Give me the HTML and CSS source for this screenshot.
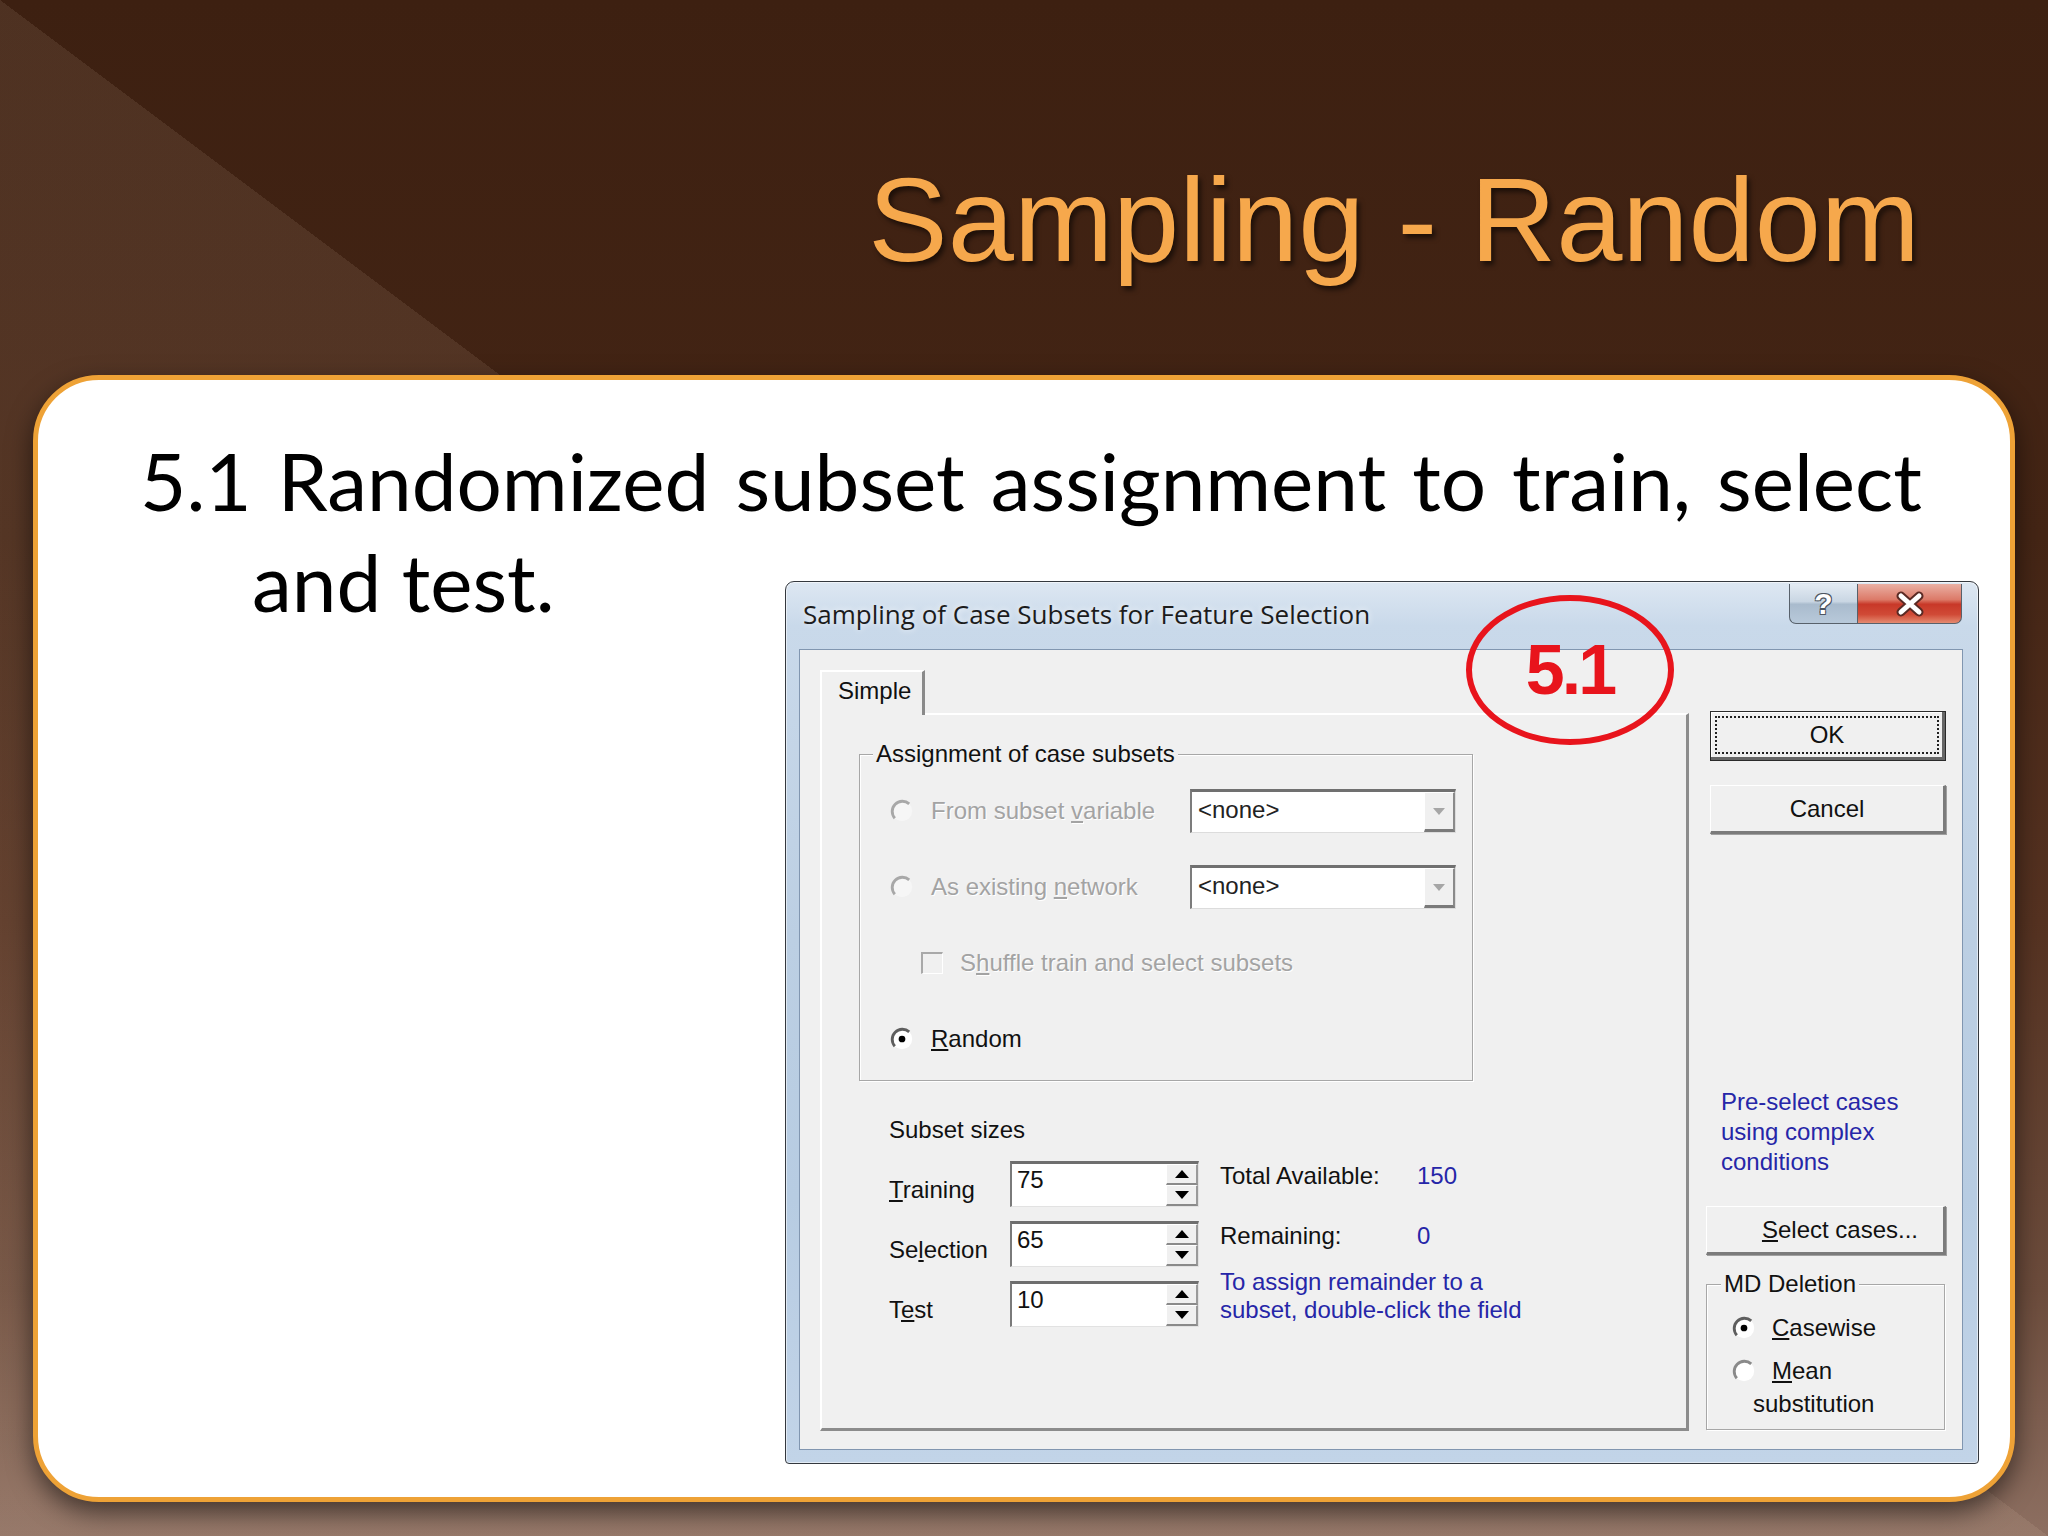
FILE: index.html
```html
<!DOCTYPE html>
<html>
<head>
<meta charset="utf-8">
<title>Sampling - Random</title>
<link rel="stylesheet" href="styles.css">
</head>
<body>
<div class="slide">
  <h1 class="title">Sampling - Random</h1>
  <div class="card">
    <div class="line1">5.1 Randomized subset assignment to train, select</div>
    <div class="row">
      <div class="line2">and test.</div>
      <div class="dialog">
        <div class="titlebar">
          <span class="wtitle">Sampling of Case Subsets for Feature Selection</span>
          <div class="wbtns">
            <span class="wb help">?</span>
            <span class="wb close"><svg class="xicon" viewBox="0 0 40 28" width="40" height="28"><path d="M11 6 L29 22 M29 6 L11 22" stroke="#5a2a24" stroke-width="9" stroke-linecap="round"/><path d="M11 6 L29 22 M29 6 L11 22" stroke="#fff" stroke-width="5" stroke-linecap="round"/></svg></span>
          </div>
        </div>
        <div class="client">
          <div class="leftcol">
            <div class="tabs"><div class="tab">Simple</div></div>
            <div class="panel">
              <div class="group assign">
                <div class="glabel">Assignment of case subsets</div>
                <div class="opt first">
                  <div class="optlabel">
                    <svg class="rb" viewBox="0 0 20 20"><circle cx="10" cy="10" r="8.5" fill="#f6f6f6"/><path d="M4 16A8.5 8.5 0 0 1 16 4" fill="none" stroke="#a8a8a8" stroke-width="2.4"/></svg>
                    <span class="dis">From subset <u>v</u>ariable</span>
                  </div>
                  <div class="combo"><span class="cval">&lt;none&gt;</span><span class="ddbtn"><svg viewBox="0 0 12 7" width="12" height="7"><path d="M0 0H12L6 7Z" fill="#a6a6a6"/></svg></span></div>
                </div>
                <div class="opt">
                  <div class="optlabel">
                    <svg class="rb" viewBox="0 0 20 20"><circle cx="10" cy="10" r="8.5" fill="#f6f6f6"/><path d="M4 16A8.5 8.5 0 0 1 16 4" fill="none" stroke="#a8a8a8" stroke-width="2.4"/></svg>
                    <span class="dis">As existing <u>n</u>etwork</span>
                  </div>
                  <div class="combo"><span class="cval">&lt;none&gt;</span><span class="ddbtn"><svg viewBox="0 0 12 7" width="12" height="7"><path d="M0 0H12L6 7Z" fill="#a6a6a6"/></svg></span></div>
                </div>
                <div class="opt chkrow">
                  <span class="cb"></span>
                  <span class="dis">S<u>h</u>uffle train and select subsets</span>
                </div>
                <div class="opt">
                  <div class="optlabel">
                    <svg class="rb" viewBox="0 0 20 20"><circle cx="10" cy="10" r="8.5" fill="#fff"/><path d="M4 16A8.5 8.5 0 0 1 16 4" fill="none" stroke="#5e5e5e" stroke-width="2.4"/><circle cx="10" cy="10" r="2.8" fill="#000"/></svg>
                    <span><u>R</u>andom</span>
                  </div>
                </div>
              </div>
              <div class="subset">
                <div class="ss-title">Subset sizes</div>
                <div class="ss-body">
                  <div class="ss-grid">
                    <div class="ss-lbl"><u>T</u>raining</div>
                    <div class="spin"><span class="sval">75</span><span class="sbtns"><span class="sb"><svg viewBox="0 0 14 8" width="14" height="8"><path d="M0 8H14L7 0Z" fill="#000"/></svg></span><span class="sb"><svg viewBox="0 0 14 8" width="14" height="8"><path d="M0 0H14L7 8Z" fill="#000"/></svg></span></span></div>
                    <div class="ss-lbl">Se<u>l</u>ection</div>
                    <div class="spin"><span class="sval">65</span><span class="sbtns"><span class="sb"><svg viewBox="0 0 14 8" width="14" height="8"><path d="M0 8H14L7 0Z" fill="#000"/></svg></span><span class="sb"><svg viewBox="0 0 14 8" width="14" height="8"><path d="M0 0H14L7 8Z" fill="#000"/></svg></span></span></div>
                    <div class="ss-lbl">T<u>e</u>st</div>
                    <div class="spin"><span class="sval">10</span><span class="sbtns"><span class="sb"><svg viewBox="0 0 14 8" width="14" height="8"><path d="M0 8H14L7 0Z" fill="#000"/></svg></span><span class="sb"><svg viewBox="0 0 14 8" width="14" height="8"><path d="M0 0H14L7 8Z" fill="#000"/></svg></span></span></div>
                  </div>
                  <div class="ss-info">
                    <div class="kv"><span>Total Available:</span><span class="blue">150</span></div>
                    <div class="kv r2"><span>Remaining:</span><span class="blue">0</span></div>
                    <div class="note blue">To assign remainder to a<br>subset, double-click the field</div>
                  </div>
                </div>
              </div>
            </div>
          </div>
          <div class="rightcol">
            <div class="btn ok"><span class="focus">OK</span></div>
            <div class="btn cancel">Cancel</div>
            <div class="presel blue">Pre-select cases<br>using complex<br>conditions</div>
            <div class="btn selc"><span><u>S</u>elect cases...</span></div>
            <div class="group md">
              <div class="glabel">MD Deletion</div>
              <div class="mdrow first">
                <svg class="rb" viewBox="0 0 20 20"><circle cx="10" cy="10" r="8.5" fill="#fff"/><path d="M4 16A8.5 8.5 0 0 1 16 4" fill="none" stroke="#5e5e5e" stroke-width="2.4"/><circle cx="10" cy="10" r="2.8" fill="#000"/></svg>
                <span><u>C</u>asewise</span>
              </div>
              <div class="mdrow">
                <svg class="rb" viewBox="0 0 20 20"><circle cx="10" cy="10" r="8.5" fill="#fff"/><path d="M4 16A8.5 8.5 0 0 1 16 4" fill="none" stroke="#8a8a8a" stroke-width="2.4"/></svg>
                <span><u>M</u>ean</span>
              </div>
              <div class="mdsub">substitution</div>
            </div>
          </div>
        </div>
        <div class="mark">5.1</div>
      </div>
    </div>
  </div>
</div>
</body>
</html>
```

FILE: styles.css
```css
* { box-sizing: border-box; }
html, body { margin: 0; padding: 0; }
body {
  width: 2048px;
  height: 1536px;
  overflow: hidden;
  font-family: "Liberation Sans", Arial, sans-serif;
}
.slide {
  width: 2048px;
  height: 1536px;
  display: flex;
  flex-direction: column;
  background:
    linear-gradient(to top right, rgba(255, 225, 200, 0.09) 50%, rgba(0, 0, 0, 0) 50%),
    linear-gradient(to bottom, #3d2011 0%, #442515 35%, #553221 60%, #6c4c3c 84%, #8d6f61 100%);
}
.title {
  margin: 160px 128px 0 0;
  align-self: flex-end;
  font: 400 119px/119px "Liberation Sans", Arial, sans-serif;
  color: #f6a84c;
  text-shadow: 3px 4px 5px rgba(0, 0, 0, 0.55);
}
.card {
  margin: 96px 0 0 33px;
  width: 1982px;
  height: 1127px;
  background: #fff;
  border: 5px solid #eea236;
  border-radius: 66px;
  box-shadow: 0 10px 26px rgba(0, 0, 0, 0.55);
  padding-top: 50px;
  display: flex;
  flex-direction: column;
}
.line1 {
  margin-left: 102px;
  width: 1782px;
  font: 400 80px/101px Lato, sans-serif;
  color: #000;
  text-align: justify;
  text-align-last: justify;
}
.row { display: flex; }
.line2 {
  flex: none;
  width: 747px;
  padding-left: 214px;
  font: 400 80px/101px Lato, sans-serif;
  color: #000;
}

/* Dialog window */
.dialog {
  position: relative;
  flex: none;
  margin-top: 50px;
  width: 1194px;
  height: 883px;
  border: 1px solid #34383e;
  border-radius: 9px 9px 4px 4px;
  background: linear-gradient(to bottom, #dde7f2 0%, #c9d9ea 5%, #bccfe3 40%, #b7cce2 70%, #c2d4e8 100%);
  box-shadow: inset 0 0 0 1px rgba(255, 255, 255, 0.55);
  display: flex;
  flex-direction: column;
  font: 400 24px/30px "Liberation Sans", Arial, sans-serif;
  color: #111;
}
.titlebar {
  height: 67px;
  flex: none;
  display: flex;
  align-items: flex-start;
  padding-left: 17px;
}
.wtitle {
  margin-top: 16px;
  font: 400 26px/32px "Open Sans", "Liberation Sans", sans-serif;
  color: #1c1c1c;
  text-shadow: 0 0 6px rgba(255, 255, 255, 0.9);
}
.wbtns {
  margin: 2px 16px 0 auto;
  display: flex;
  height: 40px;
}
.wb {
  height: 40px;
  display: flex;
  align-items: center;
  justify-content: center;
  border: 1px solid #58616b;
  border-top: none;
}
.help {
  width: 68px;
  border-right: none;
  border-radius: 0 0 0 7px;
  background: linear-gradient(to bottom, #e3ebf3 0%, #c9d6e3 45%, #a9bbcd 52%, #b8c9da 100%);
  font: 700 30px/1 "Liberation Sans", Arial, sans-serif;
  color: #fff;
  text-shadow: -1px -1px 0 #4d5560, 1px -1px 0 #4d5560, -1px 1px 0 #4d5560, 1px 1px 0 #4d5560;
}
.close {
  width: 105px;
  border-radius: 0 0 7px 0;
  background: linear-gradient(to bottom, #eab0a4 0%, #dc7a68 40%, #c83828 52%, #d04a36 78%, #e58a70 100%);
}
.xicon { display: block; }

.client {
  flex: 1;
  margin: 0 15px 13px 13px;
  background: #f0f0f0;
  border: 1px solid #8196b0;
  display: flex;
  gap: 17px;
  padding: 20px 16px 0 20px;
}
.leftcol {
  width: 869px;
  flex: none;
  display: flex;
  flex-direction: column;
}
.tabs { height: 43px; display: flex; position: relative; z-index: 1; }
.tab {
  width: 105px;
  height: 45px;
  background: #f0f0f0;
  border-style: solid;
  border-width: 2px 3px 0 2px;
  border-color: #fff #8a8a8a #f0f0f0 #fff;
  padding: 2px 0 0 16px;
  line-height: 34px;
}
.panel {
  height: 718px;
  border-style: solid;
  border-width: 2px 3px 3px 2px;
  border-color: #fff #8c8c8c #8c8c8c #fff;
  padding: 39px 0 0 37px;
}

.group {
  border: 1px solid #a7a7a7;
  box-shadow: 1px 1px 0 #fff, inset 1px 1px 0 #fff;
  display: flex;
  flex-direction: column;
}
.glabel {
  align-self: flex-start;
  margin-top: -15px;
  padding: 0 3px;
  background: #f0f0f0;
  line-height: 28px;
}
.assign {
  width: 614px;
  height: 327px;
  padding-left: 30px;
}
.assign .glabel { margin-left: -17px; }
.opt {
  height: 50px;
  display: flex;
  align-items: center;
  margin-top: 26px;
}
.opt.first { margin-top: 18px; }
.optlabel {
  width: 300px;
  flex: none;
  display: flex;
  align-items: center;
}
.rb { width: 24px; height: 24px; flex: none; margin-right: 17px; }
.dis { color: #a3a3a3; text-shadow: 1px 1px 0 #fff; }
.combo {
  width: 266px;
  height: 44px;
  background: #fff;
  border-style: solid;
  border-width: 3px 1px 1px 2px;
  border-color: #707070 #dcdcdc #dcdcdc #7c7c7c;
  display: flex;
  align-items: center;
}
.cval { padding-left: 6px; line-height: 30px; margin-top: -4px; color: #222; }
.ddbtn {
  margin-left: auto;
  width: 31px;
  height: 100%;
  background: #f0f0f0;
  border-style: solid;
  border-width: 1px 2px 3px 1px;
  border-color: #fff #8a8a8a #7a7a7a #fff;
  display: flex;
  align-items: center;
  justify-content: center;
}
.chkrow { padding-left: 31px; }
.cb {
  width: 22px;
  height: 22px;
  flex: none;
  margin-right: 17px;
  background: #f0f0f0;
  border-style: solid;
  border-width: 2px 1px 1px 2px;
  border-color: #a9a9a9 #fff #fff #a9a9a9;
}

.subset { margin: 34px 0 0 30px; }
.ss-title { line-height: 30px; }
.ss-body { display: flex; margin-top: 16px; }
.ss-grid {
  display: grid;
  grid-template-columns: 121px 189px;
  grid-auto-rows: 46px;
  row-gap: 14px;
}
.ss-lbl { padding-top: 14px; line-height: 30px; }
.spin {
  background: #fff;
  border-style: solid;
  border-width: 3px 1px 1px 2px;
  border-color: #6e6e6e #e2e2e2 #e2e2e2 #7a7a7a;
  display: flex;
}
.sval { padding: 1px 0 0 5px; line-height: 30px; }
.sbtns {
  margin-left: auto;
  width: 32px;
  display: flex;
  flex-direction: column;
  background: #f0f0f0;
}
.sb {
  flex: 1;
  display: flex;
  align-items: center;
  justify-content: center;
  border-style: solid;
  border-width: 1px 2px 2px 1px;
  border-color: #fff #9a9a9a #8a8a8a #fff;
}
.ss-info { margin-left: 21px; }
.kv { display: grid; grid-template-columns: 197px auto; line-height: 30px; }
.kv.r2 { margin-top: 30px; }
.note { margin-top: 17px; line-height: 28px; }
.blue { color: #2626a8; }

.rightcol {
  width: 240px;
  flex: none;
  display: flex;
  flex-direction: column;
}
.btn {
  background: #f0f0f0;
  display: flex;
  align-items: center;
  justify-content: center;
  border-style: solid;
  border-width: 1px 3px 3px 1px;
  border-color: #fff #7b7b7b #7b7b7b #fff;
  box-shadow: 1px 1px 0 #a0a0a0;
}
.ok {
  margin: 41px 0 0 4px;
  width: 236px;
  height: 50px;
  border: 1px solid #2a2a2a;
  box-shadow: inset -3px -3px 0 #666, inset 1px 1px 0 #fff;
  padding: 4px 6px 6px 4px;
}
.focus {
  width: 100%;
  height: 100%;
  border: 2px dotted #222;
  display: flex;
  align-items: center;
  justify-content: center;
}
.cancel {
  margin: 24px 0 0 4px;
  width: 236px;
  height: 49px;
}
.presel {
  margin: 253px 0 0 15px;
  line-height: 30px;
}
.selc {
  margin-top: 29px;
  width: 240px;
  height: 49px;
}
.selc span { padding-left: 30px; }
.md {
  margin-top: 29px;
  width: 239px;
  height: 146px;
  padding-left: 25px;
}
.md .glabel { margin-left: -11px; }
.mdrow {
  height: 40px;
  display: flex;
  align-items: center;
  margin-top: 3px;
}
.mdrow.first { margin-top: 10px; }
.mdrow .rb { margin-right: 16px; }
.mdsub { margin: -2px 0 0 21px; line-height: 30px; }

.mark {
  position: absolute;
  left: 680px;
  top: 13px;
  width: 208px;
  height: 150px;
  border: 6px solid #e8141c;
  border-radius: 50%;
  display: flex;
  align-items: center;
  justify-content: center;
  font: 700 70px/1 "Liberation Sans", Arial, sans-serif;
  letter-spacing: -3px;
  color: #e8141c;
}
```
